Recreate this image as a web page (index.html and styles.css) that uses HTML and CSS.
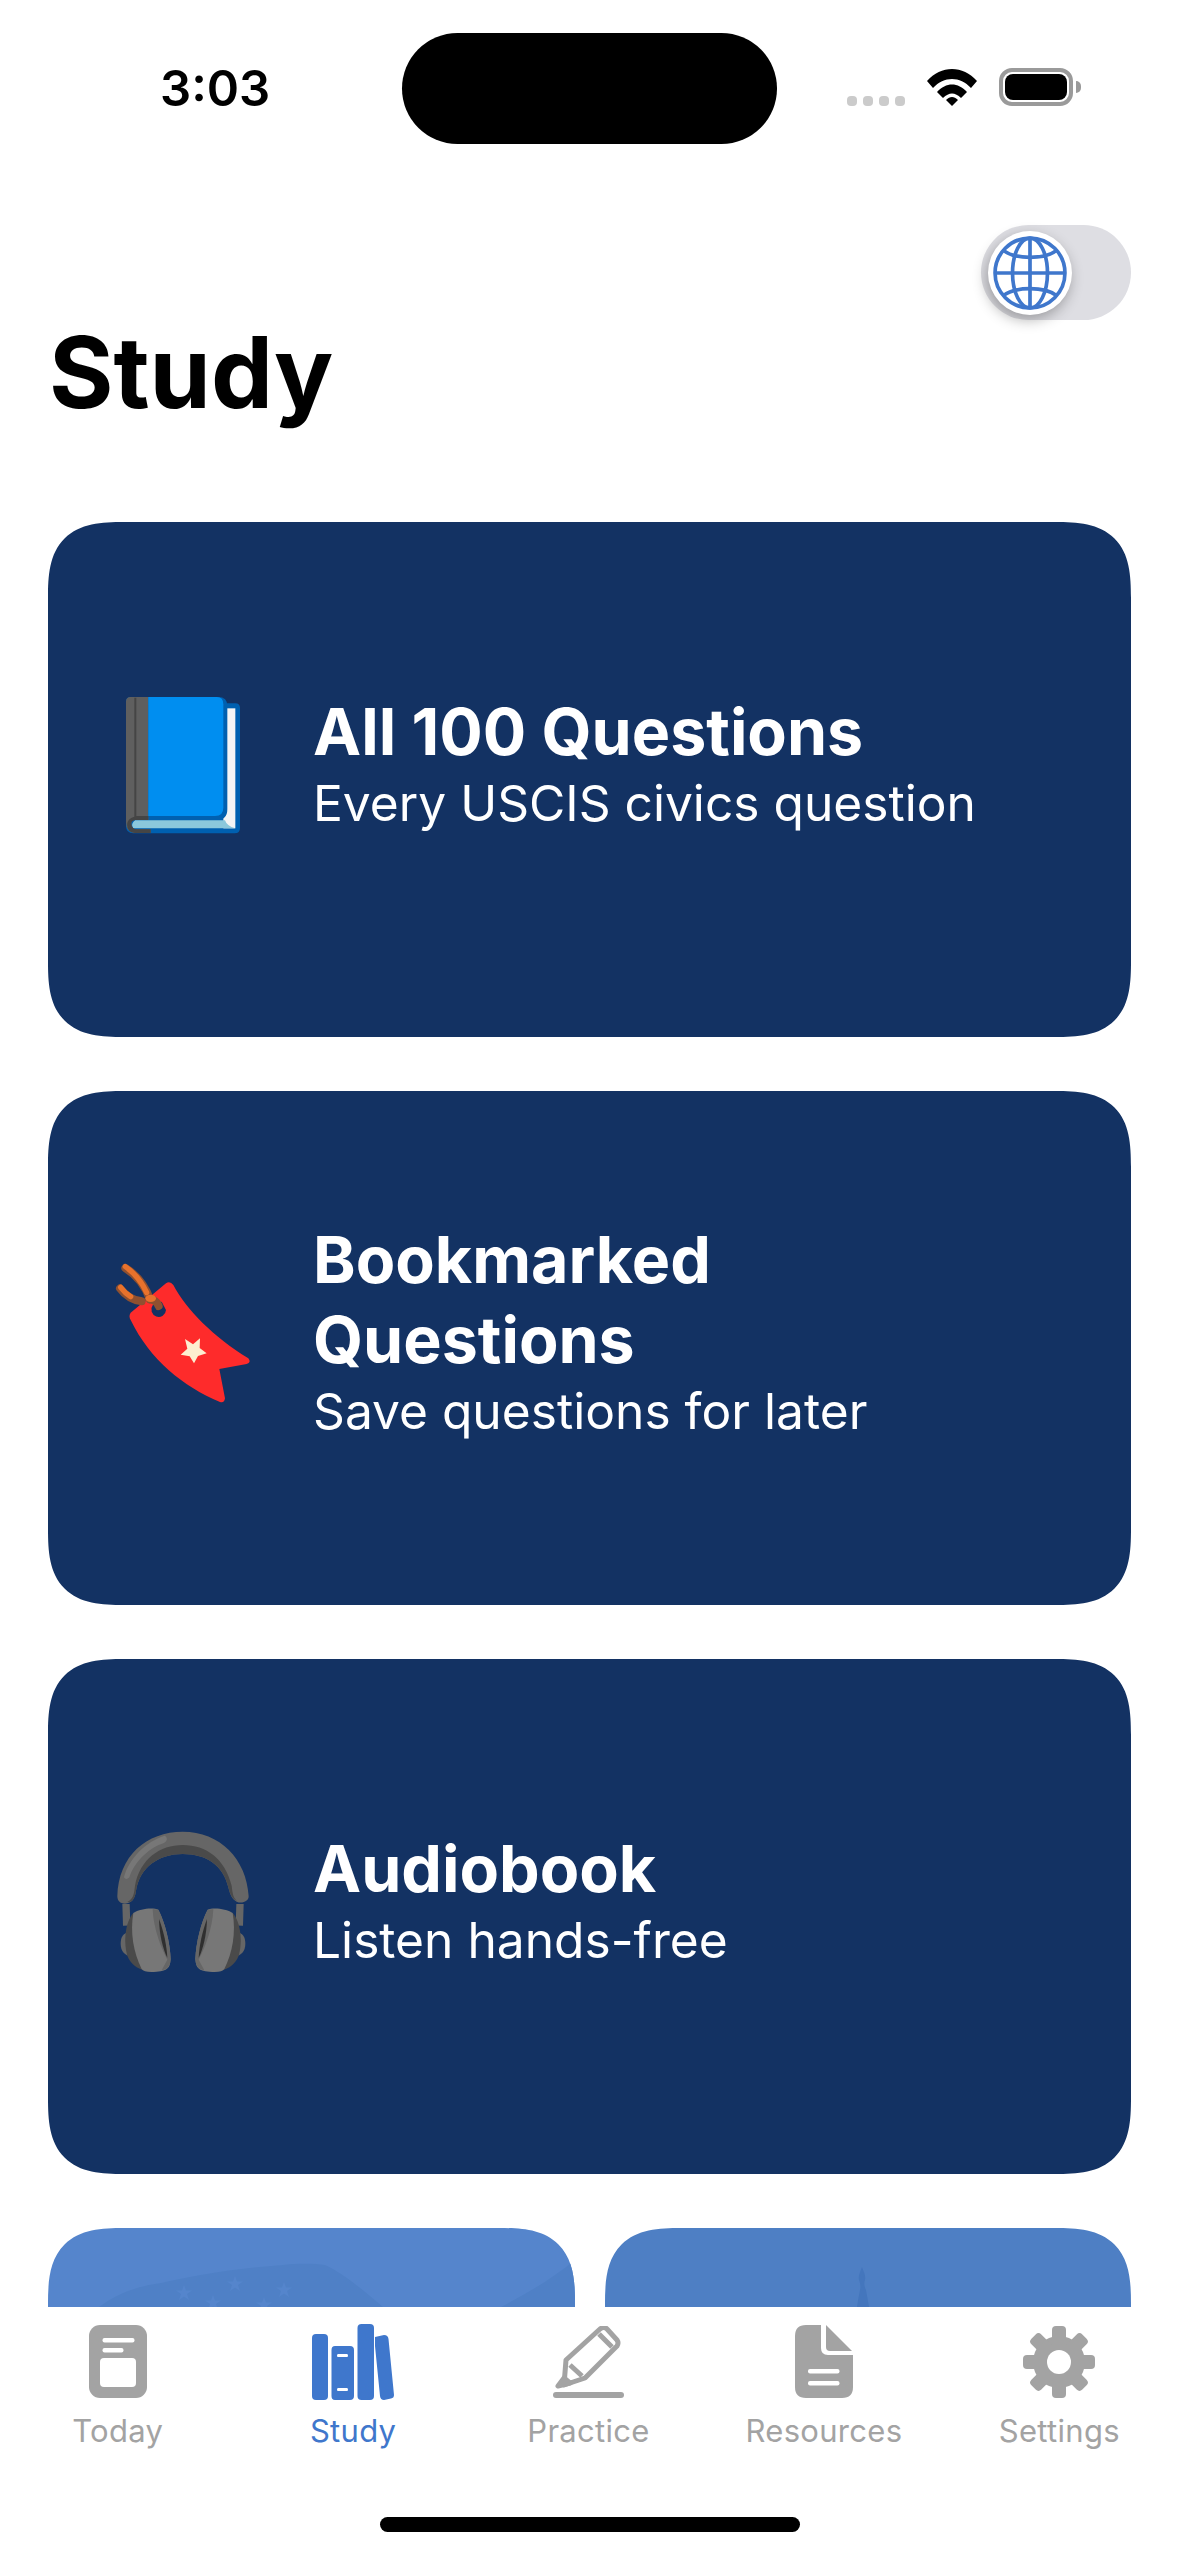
FILE: index.html
```html
<!DOCTYPE html>
<html lang="en">
<head>
  <meta charset="UTF-8">
  <meta name="viewport" content="width=device-width, initial-scale=1.0">
  <title>Study</title>
  <link rel="stylesheet" href="styles.css">
</head>
<body>
  <div class="screen">
    <!-- Status bar -->
    <div class="status-bar">
      <div class="time">3:03</div>
      <div class="island"></div>
      <div class="status-icons">
        <div class="signal"><span></span><span></span><span></span><span></span></div>
        <svg class="wifi" width="50" height="37" viewBox="0 0 50 37">
          <path d="M0 12 C14 -4 36 -4 50 12 L44 19 C33 7 17 7 6 19Z" fill="#000"/>
          <path d="M10 23 C19 13 31 13 40 23 L34 29 C28 23 22 23 16 29Z" fill="#000"/>
          <path d="M19 31 C23 27 27 27 31 31 L25 37Z" fill="#000"/>
        </svg>
        <div class="battery"><div class="battery-fill"></div></div>
      </div>
    </div>

    <div class="content">
      <div class="toggle">
        <div class="knob">
          <svg width="74" height="74" viewBox="0 0 72 72" fill="none" stroke="#3f77cc" stroke-width="3.6">
            <circle cx="36" cy="36" r="34"/>
            <ellipse cx="36" cy="36" rx="17" ry="34"/>
            <path d="M36 2 V70 M2 36 H70"/>
            <path d="M10 14 C22 23 50 23 62 14"/>
            <path d="M10 58 C22 49 50 49 62 58"/>
          </svg>
        </div>
      </div>
      <h1>Study</h1>

      <div class="card">
        <svg class="card-icon" viewBox="0 17 600 600">
          <path d="M126 132 H436 Q450 132 450 146 V506 Q450 522 434 522 H130 Q108 522 108 500 V140Z" fill="#0060b0"/>
          <rect x="400" y="147" width="36" height="360" fill="#f5f5f5"/>
          <path d="M135 483 H405 Q410 500 436 507 H130 Q120 495 135 483Z" fill="#8bc8dc"/>
          <path d="M122 113 H385 Q412 113 412 140 V450 Q412 482 380 482 H135 Q122 484 124 496 Q126 508 140 510 H182 V521 H135 Q108 518 108 490 V127 Q108 113 122 113Z" fill="#0060b0"/>
          <path d="M122 113 H175 V482 H135 Q122 484 124 496 Q126 508 140 510 H182 V521 H135 Q108 518 108 490 V127 Q108 113 122 113Z" fill="#5f5f5f"/>
          <path d="M175 113 H380 Q400 113 400 135 V445 Q400 470 375 470 H175Z" fill="#008ef0"/>
          <path d="M133 115 H139 V470 H175 V482 H135 Q122 484 124 496 Q126 508 140 510 H182 V521 H135 Q108 518 112 490 Q116 476 133 472Z" fill="#454545"/>
        </svg>
        <div class="card-text">
          <div class="card-title">All 100 Questions</div>
          <div class="card-sub">Every USCIS civics question</div>
        </div>
      </div>

      <div class="card">
        <svg class="card-icon" viewBox="0 -18 600 600">
          <path d="M122 218 L228 130 Q240 122 250 135 C290 210 370 290 475 355 Q485 368 470 372 L388 387 L405 475 Q403 490 390 486 C280 440 180 360 122 240 Q115 228 122 218Z" fill="#fe2b2b"/>
          <path d="M188 196 A22 22 0 1 0 228 210 L215 185Z" fill="#133263"/>
          <path d="M106 84 C140 105 165 135 180 178 M90 145 C105 165 125 180 155 184" fill="none" stroke="#8f5030" stroke-width="24" stroke-linecap="round"/>
          <path d="M180 178 C195 180 203 190 206 198" fill="none" stroke="#8f5030" stroke-width="24" stroke-linecap="round"/>
          <path d="M106 80 C135 100 155 125 170 158 M92 142 C102 155 110 163 122 170" fill="none" stroke="#e8722c" stroke-width="16" stroke-linecap="round"/>
          <ellipse cx="182" cy="175" rx="16" ry="11" fill="#e8722c"/>
          <path d="M330 295 L329 324 L350 340 L324 348 L312 370 L299 349 L272 344 L292 326 L285 297 L309 313Z" fill="#fdeed0"/>
        </svg>
        <div class="card-text">
          <div class="card-title">Bookmarked<br>Questions</div>
          <div class="card-sub">Save questions for later</div>
        </div>
      </div>

      <div class="card">
        <svg class="card-icon" viewBox="0 -21 600 600">
          <path d="M108 285 L110 350" stroke="#666" stroke-width="22"/>
          <path d="M450 285 L448 350" stroke="#666" stroke-width="22"/>
          <path d="M82 262 C85 140 170 68 278 68 C390 68 470 150 476 262 C476 278 455 285 440 278 C425 270 420 255 415 235 C400 170 350 135 278 135 C205 135 150 175 138 245 C135 270 125 282 105 284 C90 284 82 275 82 262Z" fill="#666"/>
          <path d="M112 278 C130 270 132 255 135 230 C150 150 210 108 278 108 C350 108 405 150 425 230 C428 255 430 270 445 278 C425 270 420 255 415 235 C400 170 350 135 278 135 C205 135 150 175 138 245 C135 270 125 282 112 278Z" fill="#4a4a4a"/>
          <path d="M102 205 C115 150 170 95 225 80 Q238 90 222 102 C180 115 135 155 118 205 Q108 215 102 205Z" fill="#777"/>
          <g id="ear">
            <path d="M92 405 C92 385 98 378 108 372 L130 440 C110 445 92 430 92 405Z" fill="#666"/>
            <path d="M130 312 C105 340 100 400 112 440 C122 465 140 478 165 485 L200 400Z" fill="#4a4a4a"/>
            <path d="M130 312 C150 298 190 295 205 302 C225 340 240 400 242 450 C240 475 235 485 200 488 C175 490 160 488 155 480 C130 430 120 370 130 312Z" fill="#777"/>
            <path d="M188 300 L205 302 C225 340 240 400 242 450 C240 470 236 480 215 484 L232 452 C215 420 190 360 188 300Z" fill="#666"/>
            <path d="M207 330 C222 370 230 410 232 446 C218 420 208 375 207 330Z" fill="#2f2f2f"/>
          </g>
          <use href="#ear" transform="matrix(-1 0 0 1 558 0)"/>
        </svg>
        <div class="card-text">
          <div class="card-title">Audiobook</div>
          <div class="card-sub">Listen hands-free</div>
        </div>
      </div>

      <div class="small-cards">
        <div class="small-card small-left">
          <svg class="small-art" viewBox="0 0 527 79">
            <defs><path id="star" d="M0 -8 L2 -2.5 L8 -2.5 L3 1 L5 7 L0 3.4 L-5 7 L-3 1 L-8 -2.5 L-2 -2.5Z"/></defs>
            <path d="M51 79 C70 65 90 58 113 55 C150 47 190 40 235 37 C255 35 268 36 277 37 C295 45 315 62 335 79Z" fill="#4f80c6"/>
            <path d="M453 79 C480 65 505 50 527 32 V79Z" fill="#4f80c6"/>
            <g fill="#5585cc">
              <use href="#star" x="136" y="65"/>
              <use href="#star" x="187" y="56"/>
              <use href="#star" x="236" y="62"/>
              <use href="#star" x="165" y="75"/>
              <use href="#star" x="216" y="77"/>
            </g>
          </svg>
        </div>
        <div class="small-card small-right">
          <svg class="small-art" viewBox="0 0 526 79">
            <path d="M257 39 C259 44 261 48 260 52 C259 55 259 58 261 62 C262 67 263 73 264 79 H252 C253 72 254 67 255 62 C256 58 255 55 254 52 C253 48 255 44 257 39Z" fill="#4476bd"/>
          </svg>
        </div>
      </div>
    </div>

    <!-- Tab bar -->
    <div class="tab-bar">
      <div class="tab">
        <div class="tab-icon">
          <svg width="58" height="73" viewBox="0 0 58 73">
            <rect width="58" height="73" rx="11" fill="#a3a3a3"/>
            <rect x="13.500" y="13" width="32" height="4.500" rx="2" fill="#fff"/>
            <rect x="13.500" y="23" width="21" height="4.500" rx="2" fill="#fff"/>
            <rect x="11" y="33" width="36" height="29" rx="4" fill="#fff"/>
          </svg>
        </div>
        <div class="tab-label">Today</div>
      </div>
      <div class="tab active">
        <div class="tab-icon">
          <svg width="82" height="76" viewBox="0 0 82 76" fill="#3f77cc">
            <rect x="0" y="10" width="16" height="66" rx="4"/>
            <path d="M23 22 H38 Q42 22 42 26 V72 Q42 76 38 76 H23 Q19.500 76 19.500 72 V26 Q19.500 22 23 22Z M26 30 Q25 30 25 31.500 Q25 33 26 33 H35 Q36 33 36 31.500 Q36 30 35 30Z M26 64 Q25 64 25 65.500 Q25 67 26 67 H35 Q36 67 36 65.500 Q36 64 35 64Z" fill-rule="evenodd"/>
            <rect x="45.500" y="0" width="16.500" height="76" rx="4"/>
            <path d="M63 13 L72 11 Q76 11 76.500 15 L82 71 Q82 74 79 74.500 L72 76 Q68.500 76 68 72 L63 22Z"/>
          </svg>
        </div>
        <div class="tab-label">Study</div>
      </div>
      <div class="tab">
        <div class="tab-icon">
          <svg width="71" height="72" viewBox="0 0 71 72" fill="none" stroke="#a3a3a3" stroke-width="5" stroke-linejoin="round">
            <path d="M13 34 L47 3 Q51 0 54 3 L64 14 Q66 17 64 20 L32 52 L11 59Z"/>
            <path d="M46 8 L59 21 M17 39 L29 50"/>
            <path d="M11 52 L5 60 L17 57Z" fill="#a3a3a3"/>
            <rect x="0" y="66" width="71" height="6" rx="3" fill="#a3a3a3" stroke="none"/>
          </svg>
        </div>
        <div class="tab-label">Practice</div>
      </div>
      <div class="tab">
        <div class="tab-icon">
          <svg width="58" height="73" viewBox="0 0 58 73" fill="#a3a3a3">
            <path d="M11 0 H26 V23 Q26 30 33 30 H58 V62 Q58 73 47 73 H11 Q0 73 0 62 V11 Q0 0 11 0Z"/>
            <path d="M31 0 L57 26 H35 Q31 26 31 22Z"/>
            <rect x="13" y="44" width="31.500" height="4.500" rx="2" fill="#fff"/>
            <rect x="13" y="56" width="31.500" height="4.500" rx="2" fill="#fff"/>
          </svg>
        </div>
        <div class="tab-label">Resources</div>
      </div>
      <div class="tab">
        <div class="tab-icon">
          <svg width="72" height="72" viewBox="0 0 72 72" fill="#a3a3a3">
            <circle cx="36" cy="36" r="26"/>
            <rect x="29" y="0" width="14" height="72" rx="4"/>
            <rect x="29" y="0" width="14" height="72" rx="4" transform="rotate(45 36 36)"/>
            <rect x="29" y="0" width="14" height="72" rx="4" transform="rotate(90 36 36)"/>
            <rect x="29" y="0" width="14" height="72" rx="4" transform="rotate(135 36 36)"/>
            <circle cx="36" cy="36" r="12" fill="#fff"/>
          </svg>
        </div>
        <div class="tab-label">Settings</div>
      </div>
      <div class="home-indicator"></div>
    </div>
  </div>
</body>
</html>
```

FILE: styles.css
```css
* {
  margin: 0;
  padding: 0;
  box-sizing: border-box;
  font-family: Inter, "Noto Sans", sans-serif;
}

body {
  background-color: #fff;
}

.screen {
  width: 1179px;
  height: 2556px;
  display: flex;
  flex-direction: column;
  overflow: hidden;
}

/* Status bar */
.status-bar {
  display: flex;
  height: 144px;
  padding: 33px 106px 0 0;
  flex-shrink: 0;
}

.time {
  width: 402px;
  padding: 28px 0 0 160px;
  font-size: 49px;
  line-height: 56px;
  font-weight: 600;
  color: #000;
}

.island {
  width: 375px;
  height: 111px;
  background-color: #000;
  border-radius: 56px;
}

.status-icons {
  display: flex;
  align-items: flex-end;
  gap: 22px;
  margin-left: auto;
  padding-top: 35px;
  height: 73px;
}

.signal {
  display: flex;
  gap: 6px;
}

.signal span {
  width: 10px;
  height: 10px;
  border-radius: 4px;
  background-color: #cbcbcb;
}

.battery {
  position: relative;
  width: 74px;
  height: 38px;
  border: 4px solid #9a9a9a;
  border-radius: 13px;
  padding: 2px;
}

.battery::after {
  content: "";
  position: absolute;
  right: -12px;
  top: 9px;
  width: 5px;
  height: 12px;
  background-color: #9a9a9a;
  border-radius: 0 5px 5px 0;
}

.battery-fill {
  width: 100%;
  height: 100%;
  background-color: #000;
  border-radius: 8px;
}

/* Content */
.content {
  flex: 1;
  min-height: 0;
  overflow: hidden;
  padding: 81px 48px 0;
  display: flex;
  flex-direction: column;
}

.toggle {
  align-self: flex-end;
  width: 150px;
  height: 95px;
  flex-shrink: 0;
  background-color: #dedee3;
  border-radius: 48px;
  display: flex;
  align-items: center;
  padding-left: 7px;
}

.knob {
  width: 84px;
  height: 84px;
  background-color: #fff;
  border-radius: 50%;
  box-shadow: -2px 5px 14px rgba(0, 0, 0, 0.3);
  display: flex;
  align-items: center;
  justify-content: center;
}

h1 {
  font-size: 98.500px;
  line-height: 115px;
  font-weight: 700;
  color: #000;
  margin: -5px 0 92px 1px;
  flex-shrink: 0;
}

.card {
  display: flex;
  align-items: center;
  height: 514.500px;
  flex-shrink: 0;
  margin-bottom: 54px;
  padding-left: 42px;
  background-color: #133263;
  border-radius: 76px;
  corner-shape: superellipse(1.5);
}

.card-icon {
  width: 200px;
  height: 200px;
  flex-shrink: 0;
  margin: 0 23px 28px 0;
}

.card-text {
  margin-bottom: 33px;
}

.card-title {
  font-size: 64.500px;
  line-height: 80px;
  font-weight: 700;
  color: #fff;
}

.card-sub {
  font-size: 49.700px;
  line-height: 62px;
  font-weight: 400;
  color: #fff;
}

.small-cards {
  display: grid;
  grid-template-columns: 527px 526px;
  gap: 30px;
  flex-shrink: 0;
}

.small-card {
  height: 300px;
  border-radius: 76px;
  corner-shape: superellipse(1.5);
  overflow: hidden;
}

.small-left {
  background-color: #5585cc;
}

.small-right {
  background-color: #4e7fc4;
}

.small-art {
  display: block;
  width: 100%;
  height: 79px;
}

/* Tab bar */
.tab-bar {
  position: relative;
  display: flex;
  height: 249px;
  flex-shrink: 0;
  background-color: #fff;
  padding: 16px 2px 0 0;
}

.tab {
  flex: 1;
  display: flex;
  flex-direction: column;
  align-items: center;
  color: #a3a3a3;
}

.tab.active {
  color: #3f77cc;
}

.tab-icon {
  height: 77px;
  display: flex;
  align-items: center;
}

.tab-label {
  margin-top: 12px;
  font-size: 31px;
  line-height: 38px;
  font-weight: 400;
  letter-spacing: 0.3px;
}

.home-indicator {
  position: absolute;
  left: 380px;
  bottom: 24px;
  width: 420px;
  height: 15px;
  background-color: #000;
  border-radius: 8px;
}
```
